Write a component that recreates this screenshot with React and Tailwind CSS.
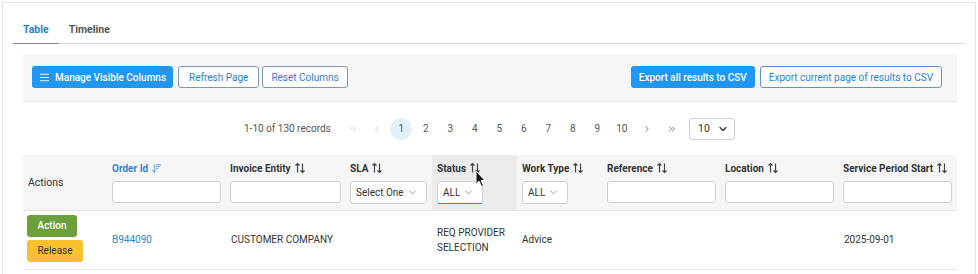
import React from "react";
import { AlignJustify, ChevronDown, ArrowDownWideNarrow, ChevronsLeft, ChevronLeft, ChevronRight, ChevronsRight } from "lucide-react";

const SortIcon = () => (
  <svg width="12" height="12" viewBox="0 0 12 12" className="inline-block ml-[3px] -mt-[2px]" fill="none" stroke="#444" strokeWidth="1.2">
    <path d="M3.5 10.5V1.5M1.5 3.5L3.5 1.5L5.5 3.5" />
    <path d="M8.5 1.5V10.5M6.5 8.5L8.5 10.5L10.5 8.5" />
  </svg>
);

const TextInput = () => (
  <div className="h-[22px] w-full rounded-[3px] border border-[#cfcfcf] bg-white" />
);

const Select = ({ label, w, focused }) => (
  <div
    className={`flex h-[23px] items-center justify-between rounded-[3px] border border-[#cfcfcf] bg-white pl-[5px] pr-[8px] text-[10px] text-[#333] ${w} ${focused ? "border-b-[#2196f3]" : ""}`}
  >
    <span>{label}</span>
    <ChevronDown size={11} strokeWidth={1.3} color="#555" />
  </div>
);

const cols = [
  { label: "Order Id", input: true, blue: true },
  { label: "Invoice Entity", input: true },
  { label: "SLA", select: "Select One", sw: "w-[77px]" },
  { label: "Status", select: "ALL", sw: "w-[46px]", active: true },
  { label: "Work Type", select: "ALL", sw: "w-[46px]" },
  { label: "Reference", input: true },
  { label: "Location", input: true },
  { label: "Service Period Start", input: true },
];

export default function App() {
  const pages = ["1", "2", "3", "4", "5", "6", "7", "8", "9", "10"];
  return (
    <div className="h-[274px] w-[978px] overflow-hidden bg-white" style={{ fontFamily: "Roboto, 'Liberation Sans', sans-serif" }}>
      <div className="relative ml-[2px] mt-[2px] h-[300px] w-[974px] border border-[#e3e3e3] bg-white">
        {/* Tabs */}
        <div className="mx-[10px] mt-[11px] flex border-b border-[#dedede]">
          <div className="-mb-px border-b border-[#8a8a8a] px-[10px] pb-[5px] pt-[8px] text-[10.5px] font-bold text-[#2c7fd0]">Table</div>
          <div className="px-[10px] pb-[5px] pt-[8px] text-[10.5px] font-bold text-[#555]">Timeline</div>
        </div>

        <div className="ml-[20px] mr-[18px]">
          {/* Toolbar */}
          <div className="mt-[10px] flex h-[48px] items-center justify-between border-b border-[#e6e6e6] bg-[#f6f6f6] px-[9px]">
            <div className="flex items-center gap-[3px]">
              <button className="flex h-[22px] items-center gap-[5px] rounded-[3px] bg-[#2196f3] px-[7px] text-[10px] font-medium text-white">
                <AlignJustify size={11} strokeWidth={2} />
                Manage Visible Columns
              </button>
              <button className="ml-[2px] h-[22px] rounded-[3px] border border-[#7f97b0] bg-white px-[10px] text-[10px] text-[#2a7fc9]">Refresh Page</button>
              <button className="h-[22px] rounded-[3px] border border-[#7f97b0] bg-white px-[8px] text-[10px] text-[#2a7fc9]">Reset Columns</button>
            </div>
            <div className="flex items-center gap-[5px] pr-[6px]">
              <button className="h-[22px] rounded-[3px] bg-[#2196f3] px-[8px] text-[10px] font-medium text-white">Export all results to CSV</button>
              <button className="h-[22px] rounded-[3px] border border-[#5f93cc] bg-white px-[8px] text-[10px] text-[#2a7fc9]">Export current page of results to CSV</button>
            </div>
          </div>

          {/* Pagination */}
          <div className="mt-[16px] flex h-[22px] items-center pl-[221px] text-[10px] text-[#555]">
            <span className="mr-[10px] w-[87px]">1-10 of 130 records</span>
            <span className="flex w-[24px] justify-center"><ChevronsLeft size={10} strokeWidth={1.3} color="#aaa" /></span>
            <span className="flex w-[24px] justify-center"><ChevronLeft size={10} strokeWidth={1.3} color="#aaa" /></span>
            {pages.map((p) => (
              <span key={p} className="flex w-[24.5px] justify-center">
                <span className={`flex h-[22px] w-[22px] items-center justify-center rounded-full ${p === "1" ? "bg-[#e2f0fb]" : ""}`}>{p}</span>
              </span>
            ))}
            <span className="flex w-[25px] justify-center"><ChevronRight size={10} strokeWidth={1.6} color="#444" /></span>
            <span className="flex w-[25px] justify-center"><ChevronsRight size={10} strokeWidth={1.6} color="#444" /></span>
            <div className="ml-[5px] flex h-[22px] w-[46px] items-center justify-between rounded-[3px] border border-[#cfcfcf] bg-white pl-[8px] pr-[5px] text-[10.5px] text-[#333]">
              <span>10</span>
              <ChevronDown size={12} strokeWidth={2.6} color="#333" />
            </div>
          </div>

          {/* Table */}
          <div className="mt-[15px] text-[10px] text-[#333]">
            <div className="grid h-[56px] grid-cols-[84px_118px_120px_87px_85px_85px_118px_118px_118px] border-b border-[#e3e3e3] bg-[#f6f6f6]">
              <div className="flex items-center pl-[5px] pt-[1px] text-[10.5px] font-normal">Actions</div>
              {cols.map((c) => (
                <div key={c.label} className={`flex flex-col pl-[5px] pr-[4px] pt-[7px] ${c.active ? "bg-[#ebebeb]" : ""}`}>
                  <div className={`flex h-[14px] items-center text-[10px] font-bold ${c.blue ? "text-[#2a85d6]" : "text-[#333]"}`}>
                    {c.label}
                    {c.blue ? (
                      <ArrowDownWideNarrow size={11} strokeWidth={1.6} color="#2a85d6" className="ml-[3px]" />
                    ) : (
                      <SortIcon />
                    )}
                  </div>
                  <div className="mt-[5px]">
                    {c.input ? <TextInput /> : <Select label={c.select} w={c.sw} focused={c.active} />}
                  </div>
                </div>
              ))}
            </div>
            <div className="grid h-[59px] grid-cols-[84px_118px_120px_87px_85px_85px_118px_118px_118px] border-b border-[#e6e6e6] bg-white">
              <div className="flex flex-col gap-[3px] pl-[4px] pt-[4px]">
                <button className="h-[22px] w-[50px] rounded-[3px] bg-[#6a9f3a] text-[10px] font-medium text-white">Action</button>
                <button className="h-[22px] w-[56px] rounded-[3px] bg-[#fbc02d] text-[10px] text-[#333]">Release</button>
              </div>
              <div className="flex items-center pl-[5px] text-[#2a85d6]">B944090</div>
              <div className="flex items-center pl-[6px]">CUSTOMER COMPANY</div>
              <div />
              <div className="flex items-center pl-[5px] leading-[15px]">REQ PROVIDER<br />SELECTION</div>
              <div className="flex items-center pl-[5px]">Advice</div>
              <div />
              <div />
              <div className="flex items-center pl-[6px]">2025-09-01</div>
            </div>
          </div>
        </div>

        {/* mouse cursor */}
        <svg className="absolute left-[472px] top-[167px]" width="12" height="18" viewBox="0 0 12 18">
          <path d="M1 1 L1 14 L4 11 L6.5 16.5 L8.5 15.5 L6 10.5 L10 10.5 Z" fill="#111" stroke="#fff" strokeWidth="1" />
        </svg>
      </div>
    </div>
  );
}
